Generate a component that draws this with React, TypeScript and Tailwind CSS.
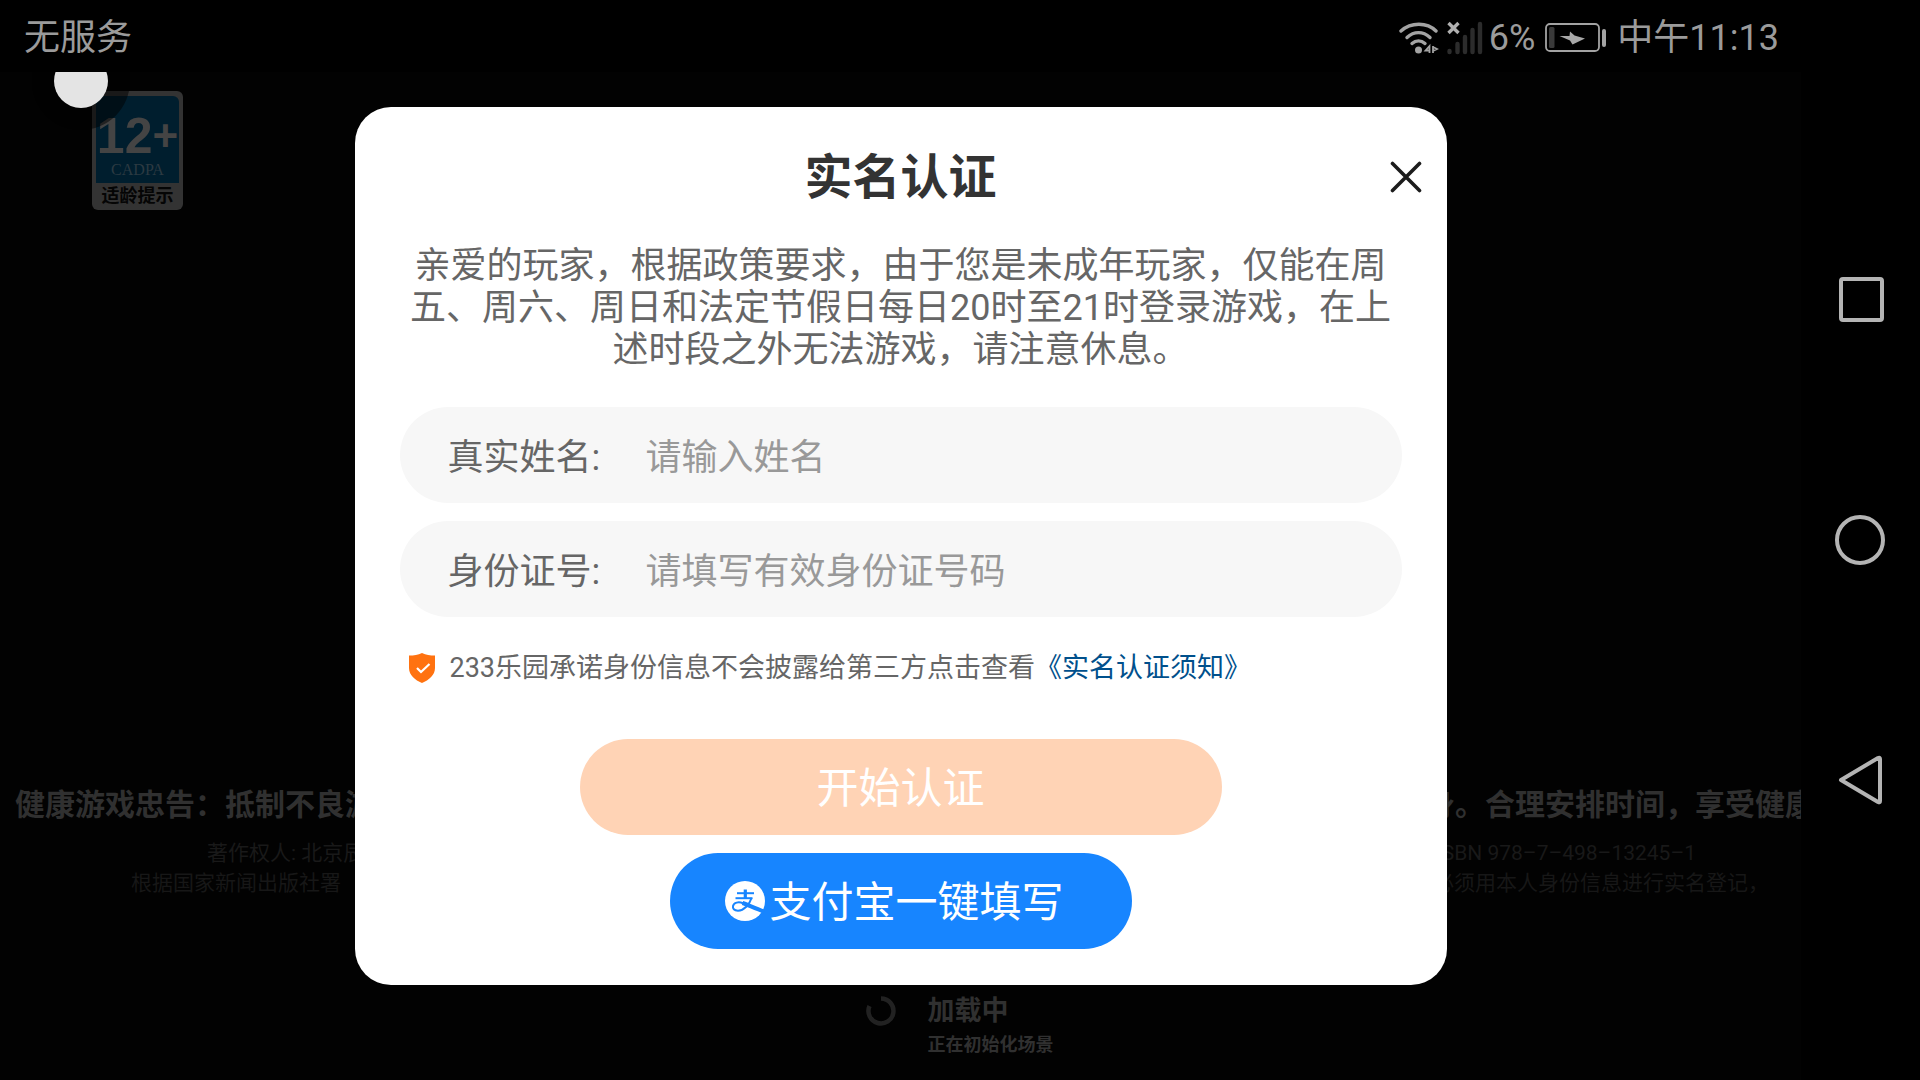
import { useState } from 'react'

function WifiIcon() {
  return (
    <svg width="40" height="34" viewBox="0 0 40 34" fill="none" stroke="#a3a3a3" strokeWidth="3.4" strokeLinecap="round">
      <path d="M2 10C12 1 28 1 37 10" />
      <path d="M8 16.500C15 10 24 10 31 16.500" />
      <path d="M13 22.500C17 19 22 19 26 22.500" />
      <circle cx="19.500" cy="29" r="3.500" fill="#a3a3a3" stroke="none" />
      <path d="M30.500 32V25L26.500 29.500H30M34 25V32M34 26L38 28L34 30" strokeWidth="1.800" strokeLinecap="butt" />
    </svg>
  )
}

function SignalIcon() {
  return (
    <svg width="36" height="34" viewBox="0 0 36 34" fill="none" strokeLinecap="round">
      <g stroke="#2c2c2c" strokeWidth="4.400">
        <path d="M2.500 30V31" />
        <path d="M10.500 23V31" />
        <path d="M18 16V31" />
        <path d="M25.500 9V31" />
        <path d="M33 3V31" />
      </g>
      <path d="M1.500 2L11.500 12M11.500 2L1.500 12" stroke="#b0b0b0" strokeWidth="3.400" strokeLinecap="butt" />
    </svg>
  )
}

function BatteryIcon() {
  return (
    <svg width="62" height="30" viewBox="0 0 62 30" fill="none">
      <rect x="1" y="1" width="53" height="27" rx="4" stroke="#a3a3a3" strokeWidth="1.800" />
      <rect x="4" y="4" width="5.500" height="21" rx="1.500" fill="#3a3a3a" />
      <rect x="57" y="6" width="4" height="18" rx="2" fill="#a3a3a3" />
      <path d="M14.500 13L25 17.500L27.500 21.500L40 15.500L29.500 12.500L25 8.500L24.500 13Z" fill="#a8a8a8" />
    </svg>
  )
}

function StatusBar() {
  return (
    <header className="flex h-[72px] shrink-0 items-center justify-between bg-black pl-6 pr-[22px] pt-1 text-[36px] leading-[42px] text-[#9b9b9b]">
      <span>无服务</span>
      <div className="flex items-center">
        <WifiIcon />
        <span className="ml-2">
          <SignalIcon />
        </span>
        <span className="ml-1.5">6%</span>
        <span className="ml-2.5">
          <BatteryIcon />
        </span>
        <span className="ml-2.5">中午11:13</span>
      </div>
    </header>
  )
}

function AgeBadge() {
  return (
    <div className="ml-[92px] mt-[19px] flex h-[119px] w-[91px] flex-col items-center rounded-md bg-[#333333] px-1 pt-[5px]">
      <div className="flex h-[87px] w-full flex-col items-center rounded-t-md bg-[#001e2e] pt-4 text-[#444444]">
        <div className="flex items-center font-['Liberation_Sans'] font-bold leading-[48px]">
          <span className="text-[50px]">12</span>
          <span className="text-[44px]">+</span>
        </div>
        <div className="font-['Liberation_Serif'] text-[16px] leading-[20px] text-[#2c3a42]">CADPA</div>
      </div>
      <div className="text-[18px] font-bold leading-[26px] text-[#050505]">适龄提示</div>
    </div>
  )
}

function GameScreen() {
  return (
    <div className="flex h-full flex-col whitespace-nowrap">
      <AgeBadge />
      <div className="mt-auto flex justify-between pl-[15px] text-[30px] font-bold leading-[42px] text-[#303030]">
        <span>健康游戏忠告：抵制不良游</span>
        <span className="w-[376px] overflow-hidden">身。合理安排时间，享受健康</span>
      </div>
      <div className="mt-3 flex justify-between pl-[207px] pr-[105px] text-[21px] leading-[30px] text-[#191919]">
        <span>著作权人: 北京辰</span>
        <span>ISBN 978–7–498–13245–1</span>
      </div>
      <div className="flex justify-between pl-[131px] pr-8 text-[21px] leading-[30px] text-[#171717]">
        <span>根据国家新闻出版社署（</span>
        <span>必须用本人身份信息进行实名登记，</span>
      </div>
      <div className="mt-[94px] flex justify-center gap-8 pb-5 pl-[118px] font-bold text-[#303030]">
        <svg className="mt-1" width="30" height="30" viewBox="0 0 30 30" fill="none">
          <path d="M15 2.500A12.500 12.500 0 1 1 3.500 10" stroke="#222222" strokeWidth="4.500" />
        </svg>
        <div>
          <div className="text-[27px] leading-[38px]">加载中</div>
          <div className="text-[18px] leading-[30px]">正在初始化场景</div>
        </div>
      </div>
    </div>
  )
}

function ShieldIcon() {
  return (
    <svg className="shrink-0" width="26" height="30" viewBox="0 0 26 30" fill="none">
      <path d="M13 0C17 2 21 2.500 26 2.500V15C26 22 20 27 13 30C6 27 0 22 0 15V2.500C5 2.500 9 2 13 0Z" fill="#ff7210" />
      <path d="M8 15L12 19L20.500 11" stroke="#ffffff" strokeWidth="2.200" />
    </svg>
  )
}

function AlipayIcon() {
  return (
    <svg className="shrink-0" width="40" height="40" viewBox="0 0 40 40" fill="none">
      <circle cx="20" cy="20" r="20" fill="#ffffff" />
      <g stroke="#1785ff">
        <path d="M12 12.200H29" strokeWidth="2" />
        <path d="M20.300 8.500V17.500" strokeWidth="3.200" />
        <path d="M10.500 17.200H27.500" strokeWidth="2" />
        <path d="M26.500 17C24.500 23.500 19 29.700 13 29.700C9 29.700 7.500 27.500 8 25C8.800 21.500 13.500 20.500 18 22.200" strokeWidth="2" />
        <path d="M17.500 22C24 24.300 31 28 39 30.500" strokeWidth="4" />
      </g>
    </svg>
  )
}

type FieldProps = {
  id: string
  label: string
  placeholder: string
  value: string
  onChange: (v: string) => void
}

function Field({ id, label, placeholder, value, onChange }: FieldProps) {
  return (
    <div className="flex h-24 items-center rounded-full bg-[#f7f7f7] px-12 pt-1.5 text-[36px] leading-[48px]">
      <label htmlFor={id} className="w-[198px] shrink-0 text-[#666666]">
        {label}
      </label>
      <input
        id={id}
        type="text"
        value={value}
        placeholder={placeholder}
        onChange={(e) => onChange(e.target.value)}
        className="h-12 min-w-0 flex-1 bg-transparent text-[#333333] outline-none placeholder:text-[#999999]"
      />
    </div>
  )
}

function VerifyDialog() {
  const [name, setName] = useState('')
  const [idNumber, setIdNumber] = useState('')

  return (
    <div role="dialog" aria-labelledby="dialog-title" className="relative w-[1092px] max-w-full rounded-[36px] bg-white px-[45px] pb-9 pt-[47px]">
      <h1 id="dialog-title" className="text-center text-[48px] font-bold leading-[48px] text-[#333333]">
        实名认证
      </h1>
      <button type="button" aria-label="关闭" className="absolute right-[25px] top-[54px]">
        <svg width="32" height="32" viewBox="0 0 32 32" fill="none" stroke="#1c1c1c" strokeWidth="3.600" strokeLinecap="round">
          <path d="M2.500 2.500L29.500 29.500M29.500 2.500L2.500 29.500" />
        </svg>
      </button>

      <p className="mt-[43px] text-center text-[36px] leading-[42px] text-[#666666]">
        亲爱的玩家，根据政策要求，由于您是未成年玩家，仅能在周五、周六、周日和法定节假日每日20时至21时登录游戏，在上述时段之外无法游戏，请注意休息。
      </p>

      <form className="mt-9 flex flex-col" onSubmit={(e) => e.preventDefault()}>
        <div className="flex flex-col gap-[18px]">
          <Field id="real-name" label="真实姓名:" placeholder="请输入姓名" value={name} onChange={setName} />
          <Field id="id-number" label="身份证号:" placeholder="请填写有效身份证号码" value={idNumber} onChange={setIdNumber} />
        </div>

        <div className="mt-[33px] flex items-center pl-[9px] text-[27px] leading-[36px] text-[#666666]">
          <ShieldIcon />
          <span className="ml-[15px]">233乐园承诺身份信息不会披露给第三方点击查看</span>
          <a href="#notice" className="text-[#00508c]">
            《实名认证须知》
          </a>
        </div>

        <div className="mt-[53px] flex flex-col items-center gap-[18px] text-[42px] leading-[48px] text-white">
          <button type="submit" className="h-24 w-[642px] rounded-full bg-[#ffd3b5] pt-1">
            开始认证
          </button>
          <button type="button" className="flex h-24 w-[462px] items-center justify-center gap-1 rounded-full bg-[#1785ff] pr-3">
            <AlipayIcon />
            <span className="pt-1">支付宝一键填写</span>
          </button>
        </div>
      </form>
    </div>
  )
}

function NavBar() {
  return (
    <nav className="flex w-[119px] shrink-0 flex-col items-center justify-center gap-[190px] bg-black pr-0.5">
      <button type="button" aria-label="最近任务">
        <svg width="50" height="50" viewBox="0 0 50 50" fill="none" stroke="#b4b4b4" strokeWidth="4">
          <rect x="6" y="4" width="41" height="41" rx="2" />
        </svg>
      </button>
      <button type="button" aria-label="主屏幕">
        <svg width="50" height="50" viewBox="0 0 50 50" fill="none" stroke="#b4b4b4" strokeWidth="4">
          <circle cx="25" cy="25" r="23" />
        </svg>
      </button>
      <button type="button" aria-label="返回">
        <svg width="50" height="50" viewBox="0 0 50 50" fill="none" stroke="#b4b4b4" strokeWidth="4" strokeLinejoin="round">
          <path d="M6 25L43 3Q45 2 45 4V46Q45 48 43 47Z" />
        </svg>
      </button>
    </nav>
  )
}

export default function App() {
  return (
    <div className="flex h-screen overflow-hidden bg-black font-['Roboto','Noto_Sans_CJK_SC',sans-serif]">
      <div className="flex min-w-0 flex-1 flex-col">
        <StatusBar />
        <main className="relative min-h-0 flex-1 overflow-hidden bg-[#020202]">
          <GameScreen />

          {/* floating assist ball, half hidden under the status bar */}
          <div className="absolute -top-10 left-8 flex size-[98px] items-center justify-center rounded-full bg-black/50">
            <div className="size-[54px] rounded-full bg-[#e4e4e4]" />
          </div>

          {/* dialog layer */}
          <div className="absolute inset-0 flex items-center justify-center pb-[60px]">
            <VerifyDialog />
          </div>
        </main>
      </div>
      <NavBar />
    </div>
  )
}
